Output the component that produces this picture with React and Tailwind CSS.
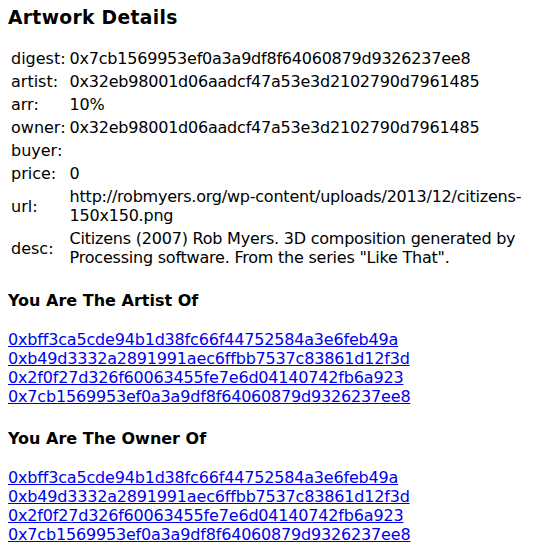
export default function App() {
  const rows = [
    ["digest:", "0x7cb1569953ef0a3a9df8f64060879d9326237ee8"],
    ["artist:", "0x32eb98001d06aadcf47a53e3d2102790d7961485"],
    ["arr:", "10%"],
    ["owner:", "0x32eb98001d06aadcf47a53e3d2102790d7961485"],
    ["buyer:", ""],
    ["price:", "0"],
    ["url:", "http://robmyers.org/wp-content/uploads/2013/12/citizens-150x150.png"],
    ["desc:", 'Citizens (2007) Rob Myers. 3D composition generated by Processing software. From the series "Like That".'],
  ];
  const links = [
    "0xbff3ca5cde94b1d38fc66f44752584a3e6feb49a",
    "0xb49d3332a2891991aec6ffbb7537c83861d12f3d",
    "0x2f0f27d326f60063455fe7e6d04140742fb6a923",
    "0x7cb1569953ef0a3a9df8f64060879d9326237ee8",
  ];
  return (
    <div className="bg-white text-black px-[8px] pt-[6.6px] pb-2 text-[16px] leading-[normal] min-h-[560px]" style={{ fontFamily: '"DejaVu Sans", sans-serif' }}>
      <h3 className="text-[18.72px] font-bold leading-[normal] tracking-[0.33px] mb-[18.7px]">Artwork Details</h3>
      <table className="border-separate border-spacing-[2px]">
        <tbody>
          {rows.map(([k, v]) => (
            <tr key={k}>
              <td className="p-[1px] align-middle">{k}</td>
              <td className="p-[1px] align-middle tracking-[-0.22px]">{v}</td>
            </tr>
          ))}
        </tbody>
      </table>
      <h4 className="text-[16px] font-bold leading-[normal] mt-[21px] mb-[19.7px]">You Are The Artist Of</h4>
      <div className="tracking-[-0.18px]">
        {links.map((l) => (
          <div key={l}>
            <a href="#" className="text-[#0000ee] underline">{l}</a>
          </div>
        ))}
      </div>
      <h4 className="text-[16px] font-bold leading-[normal] mt-[23.3px] mb-[19.7px]">You Are The Owner Of</h4>
      <div className="tracking-[-0.18px]">
        {links.map((l) => (
          <div key={l}>
            <a href="#" className="text-[#0000ee] underline">{l}</a>
          </div>
        ))}
      </div>
    </div>
  );
}
